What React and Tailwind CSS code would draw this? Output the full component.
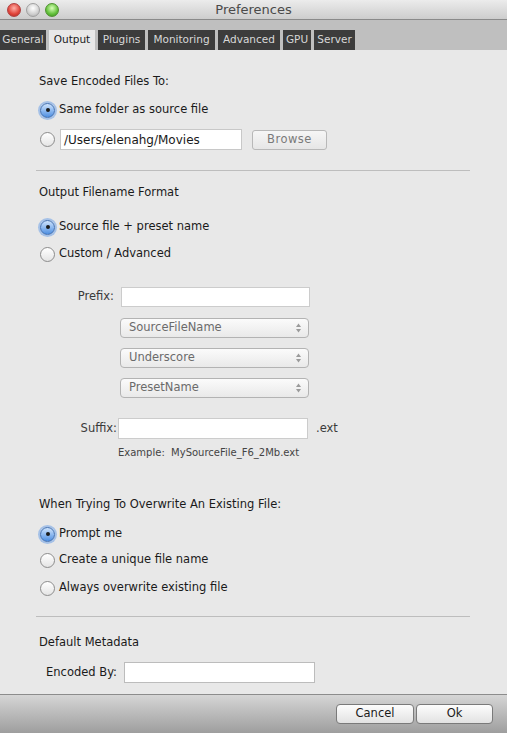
import React from 'react'

const font = { fontFamily: '"DejaVu Sans", "Liberation Sans", sans-serif' }

const tabs = ['General', 'Output', 'Plugins', 'Monitoring', 'Advanced', 'GPU', 'Server']
const tabWidths = ['w-[46px]', 'w-[46px]', 'w-[47px]', 'w-[67px]', 'w-[62px]', 'w-[28px]', 'w-[41px]']

function Radio({ checked, label }) {
  return (
    <div className="flex items-center h-[20px] ml-[40px]">
      {checked ? (
        <span className="relative flex items-center justify-center w-[15px] h-[15px] rounded-full border border-[#3f6fb3] bg-gradient-to-b from-[#cfe3fb] via-[#8fbaf0] to-[#4f8fe0] shadow-[0_0_0_2px_rgba(110,160,230,0.55)]">
          <span className="w-[4px] h-[4px] rounded-full bg-[#1b1b1b]" />
        </span>
      ) : (
        <span className="w-[15px] h-[15px] rounded-full border border-[#8c8c8c] bg-gradient-to-b from-[#ffffff] to-[#e4e4e4]" />
      )}
      <span className="ml-[4px] text-[11.5px] text-[#1a1a1a]">{label}</span>
    </div>
  )
}

function Popup({ label, mt }) {
  return (
    <div className={`flex items-center justify-between ml-[120px] w-[189px] h-[20px] ${mt} rounded-[4px] border border-[#b3b3b3] bg-gradient-to-b from-[#fbfbfb] to-[#e9e9e9] pl-[8px] pr-[6px]`}>
      <span className="text-[11.5px] text-[#6b6b6b]">{label}</span>
      <svg width="7" height="10" viewBox="0 0 7 10">
        <path d="M3.5 0.5 L6 4 L1 4 Z" fill="#9a9a9a" />
        <path d="M3.5 9.5 L6 6 L1 6 Z" fill="#9a9a9a" />
      </svg>
    </div>
  )
}

function Separator({ mt }) {
  return <div className={`${mt} ml-[36px] w-[434px] h-px bg-[#bdbdbd]`} />
}

function Heading({ children, mt }) {
  return (
    <div className={`${mt} h-[20px] flex items-center ml-[39px] text-[11.5px] text-[#1a1a1a]`}>
      {children}
    </div>
  )
}

export default function App() {
  return (
    <div className="w-[507px] h-[733px] flex flex-col bg-[#e8e8e8] overflow-hidden" style={font}>
      {/* title bar */}
      <div className="relative h-[20px] flex items-center border-b border-[#8a8a8a] bg-gradient-to-b from-[#ececec] to-[#cdcdcd]">
        <div className="flex items-center gap-[5px] pl-[7px]">
          <span className="w-[14px] h-[14px] rounded-full border border-[#b04040] bg-[radial-gradient(circle_at_50%_35%,#ffb0a8,#e0443a_60%,#a82a22)]" />
          <span className="w-[14px] h-[14px] rounded-full border border-[#a0a0a0] bg-[radial-gradient(circle_at_50%_35%,#ffffff,#d0d0d0_60%,#a8a8a8)]" />
          <span className="w-[14px] h-[14px] rounded-full border border-[#4f9030] bg-[radial-gradient(circle_at_50%_35%,#d8ffb8,#62c03a_60%,#3a8a20)]" />
        </div>
        <div className="absolute inset-0 flex items-center justify-center text-[13px] text-[#4a4a4a] pointer-events-none">
          Preferences
        </div>
      </div>

      {/* tab strip */}
      <div className="h-[30px] bg-[#bfbfbf] flex items-end gap-[3px]">
        {tabs.map((t, i) => (
          <div
            key={t}
            className={`${tabWidths[i]} h-[20px] flex items-center justify-center text-[10.5px] ${
              t === 'Output' ? 'bg-[#e8e8e8] text-[#1a1a1a]' : 'bg-[#3c3c3c] text-[#d8d8d8]'
            }`}
          >
            {t}
          </div>
        ))}
      </div>

      <div className="flex-1 flex flex-col">
        <Heading mt="mt-[22px]">Save Encoded Files To:</Heading>
        <div className="mt-[8px]">
          <Radio checked label="Same folder as source file" />
        </div>
        <div className="mt-[9px] flex items-center h-[21px]">
          <span className="ml-[40px] w-[15px] h-[15px] rounded-full border border-[#8c8c8c] bg-gradient-to-b from-[#ffffff] to-[#e4e4e4]" />
          <div className="ml-[5px] w-[182px] h-[21px] flex items-center bg-white border border-[#c8c8c8] px-[3px] text-[12px] text-[#1a1a1a]">
            /Users/elenahg/Movies
          </div>
          <button className="ml-[10px] w-[75px] h-[20px] rounded-[3px] border border-[#b8b8b8] bg-gradient-to-b from-[#f6f6f6] to-[#e6e6e6] text-[11.5px] text-[#7a7a7a] tracking-[0.5px]">
            Browse
          </button>
        </div>

        <Separator mt="mt-[20px]" />

        <Heading mt="mt-[12px]">Output Filename Format</Heading>
        <div className="mt-[14px]">
          <Radio checked label="Source file + preset name" />
        </div>
        <div className="mt-[7px]">
          <Radio label="Custom / Advanced" />
        </div>

        <div className="mt-[23px] flex items-center h-[20px]">
          <span className="w-[114px] text-right text-[11.5px] text-[#3a3a3a]">Prefix:</span>
          <div className="ml-[7px] w-[189px] h-[20px] bg-white border border-[#cccccc]" />
        </div>
        <Popup label="SourceFileName" mt="mt-[11px]" />
        <Popup label="Underscore" mt="mt-[10px]" />
        <Popup label="PresetName" mt="mt-[10px]" />

        <div className="mt-[20px] flex items-center h-[21px]">
          <span className="w-[117px] text-right text-[11.5px] text-[#3a3a3a]">Suffix:</span>
          <div className="ml-[1px] w-[190px] h-[21px] bg-white border border-[#cccccc]" />
          <span className="ml-[8px] text-[11.5px] text-[#3a3a3a]">.ext</span>
        </div>
        <div className="mt-[6px] h-[14px] flex items-center ml-[118px] text-[10px] text-[#444444] whitespace-pre">
          {'Example:  MySourceFile_F6_2Mb.ext'}
        </div>

        <Heading mt="mt-[36px]">When Trying To Overwrite An Existing File:</Heading>
        <div className="mt-[9px]">
          <Radio checked label="Prompt me" />
        </div>
        <div className="mt-[6px]">
          <Radio label="Create a unique file name" />
        </div>
        <div className="mt-[8px]">
          <Radio label="Always overwrite existing file" />
        </div>

        <Separator mt="mt-[18px]" />

        <Heading mt="mt-[16px]">Default Metadata</Heading>
        <div className="mt-[9px] flex items-center h-[21px]">
          <span className="w-[117px] text-right text-[11.5px] text-[#1a1a1a]">Encoded By:</span>
          <div className="ml-[7px] w-[191px] h-[21px] bg-white border border-[#bcbcbc]" />
        </div>
      </div>

      {/* bottom button bar */}
      <div className="h-[39px] border-t border-[#8c8c8c] bg-gradient-to-b from-[#d6d6d6] to-[#9e9e9e] flex items-center justify-end pr-[14px] gap-[2px]">
        <button className="w-[78px] h-[20px] rounded-[4px] border border-[#7a7a7a] bg-gradient-to-b from-[#fdfdfd] to-[#e2e2e2] text-[11.5px] text-[#1a1a1a]">
          Cancel
        </button>
        <button className="w-[77px] h-[20px] rounded-[4px] border border-[#7a7a7a] bg-gradient-to-b from-[#fdfdfd] to-[#e2e2e2] text-[11.5px] text-[#1a1a1a]">
          Ok
        </button>
      </div>
    </div>
  )
}
